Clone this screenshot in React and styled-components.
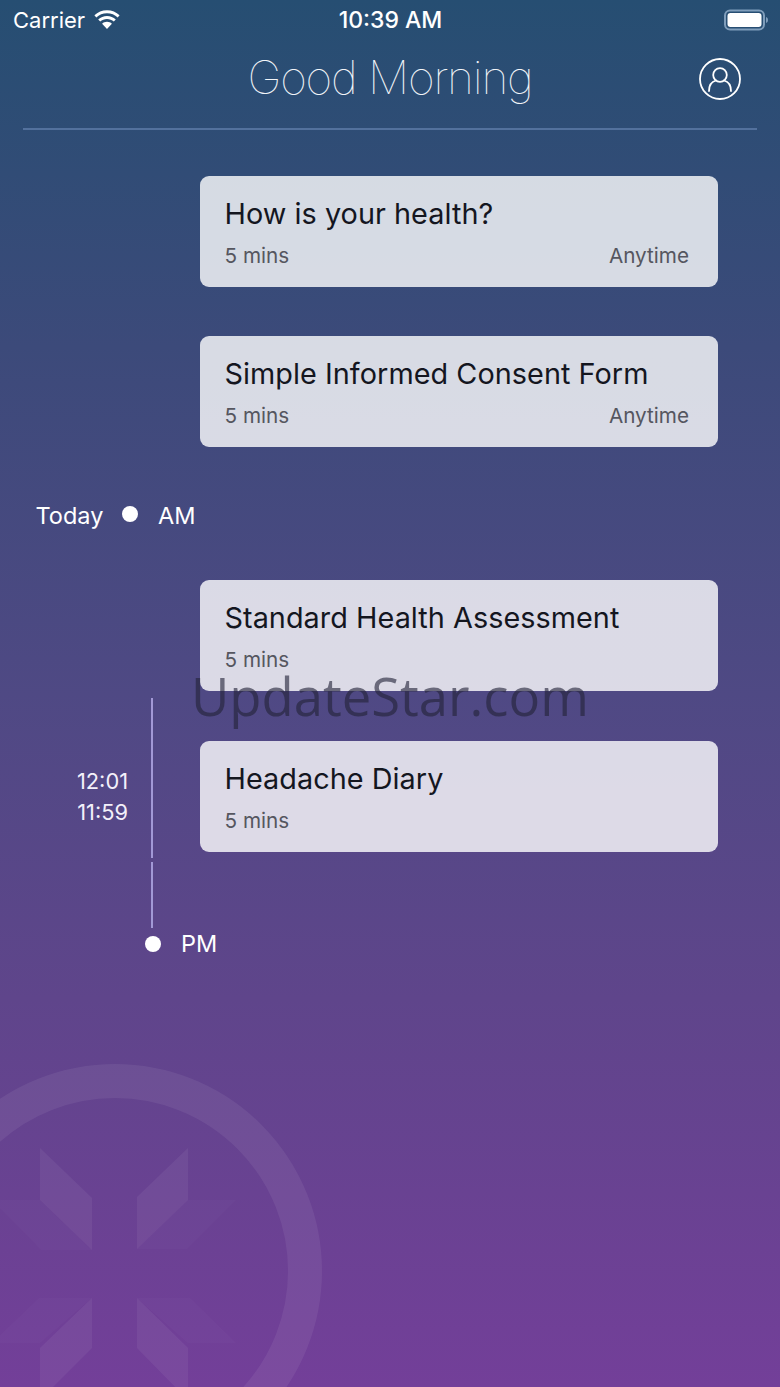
import React from "react";
import styled, { createGlobalStyle } from "styled-components";

const Global = createGlobalStyle`
  html, body { margin: 0; padding: 0; }
  body { font-family: Inter, "Liberation Sans", sans-serif; }
`;

const Page = styled.div`
  position: relative;
  width: 780px;
  height: 1387px;
  overflow: hidden;
  color: #fff;
  background: linear-gradient(180deg, #264e72 0%, #3c4a7a 25%, #4f4984 50%, #5f458b 72%, #733f99 100%);
`;

const Content = styled.div`
  position: relative;
  display: flex;
  flex-direction: column;
`;

const StatusBar = styled.div`
  display: grid;
  grid-template-columns: 1fr auto 1fr;
  align-items: center;
  height: 40px;
  padding: 0 12px 0 13px;
  font-size: 22px;
`;

const Carrier = styled.div`
  display: flex;
  align-items: center;
  gap: 8px;
`;

const Clock = styled.div`
  font-weight: 500;
  font-size: 23px;
`;

const Battery = styled.svg`
  justify-self: end;
`;

const Header = styled.header`
  position: relative;
  display: flex;
  justify-content: center;
  align-items: center;
  height: 76px;
  margin: 0 23px;
`;

const Title = styled.h1`
  margin: -2px 0 0;
  font-size: 46px;
  font-weight: 100;
  letter-spacing: -1.25px;
  color: #f2f5f9;
`;

const Profile = styled.svg`
  position: absolute;
  right: 16px;
  top: 18px;
`;

const Divider = styled.hr`
  margin: 12px 23px 0;
  height: 2px;
  border: 0;
  background: #53719d;
`;

const CardStack = styled.div`
  display: flex;
  flex-direction: column;
  gap: ${(p) => p.$gap}px;
`;

const TopCards = styled(CardStack)`
  margin: 46px 0 0 200px;
`;

const Card = styled.article`
  width: 518px;
  height: 111px;
  box-sizing: border-box;
  padding: 19.500px 29px 0 24.500px;
  border-radius: 9px;
  background: rgba(255, 255, 255, 0.8);
`;

const CardTitle = styled.div`
  font-size: 28.800px;
  line-height: 36px;
  letter-spacing: 0.05px;
  color: #14161f;
`;

const CardMeta = styled.div`
  display: flex;
  justify-content: space-between;
  margin-top: 11px;
  font-size: 20.700px;
  line-height: 26px;
  color: #55565f;
`;

const Marker = styled.div`
  display: flex;
  align-items: center;
  font-size: 23.500px;
  line-height: 30px;
`;

const TodayMarker = styled(Marker)`
  margin: 54px 0 0 35.500px;
  height: 30px;
`;

const TodayLabel = styled.span`
  width: 86.500px;
`;

const Dot = styled.span`
  width: 16px;
  height: 16px;
  border-radius: 50%;
  background: #fff;
`;

const AmDot = styled(Dot)`
  margin-top: -4px;
`;

const AmLabel = styled.span`
  margin-left: 20px;
`;

const Timeline = styled.div`
  display: flex;
  align-items: flex-start;
  margin-top: 49px;
`;

const RailColumn = styled.div`
  width: 200px;
  padding-top: 118px;
  height: 349px;
  box-sizing: border-box;
  display: flex;
  flex-direction: column;
  gap: 4px;
`;

const Rail = styled.div`
  width: 153px;
  height: ${(p) => p.$h}px;
  box-sizing: border-box;
  border-right: 2px solid #a299d6;
  padding-right: 23px;
  text-align: right;
`;

const Times = styled.div`
  padding-top: 68px;
  font-size: 21.800px;
  line-height: 31px;
  color: #f3f0fa;
`;

const PmMarker = styled(Marker)`
  margin: 0 0 0 145px;
`;

const PmLabel = styled.span`
  margin-left: 20px;
`;

const Emblem = styled.svg`
  position: absolute;
  left: 0;
  bottom: 0;
`;

const Watermark = styled.div`
  position: absolute;
  left: 191px;
  top: 659px;
  font-family: "Open Sans", sans-serif;
  font-size: 52.600px;
  line-height: 73px;
  color: rgba(36, 36, 56, 0.62);
  white-space: nowrap;
`;

const Wifi = () => (
  <svg width="28" height="20" viewBox="0 0 28 20" fill="#fff">
    <path d="M14 3.200c4.100 0 7.900 1.600 10.700 4.200l1.900-2.100C23.300 2.100 18.900.2 14 .2S4.700 2.100 1.400 5.300l1.900 2.100C6.100 4.800 9.900 3.200 14 3.200z" />
    <path d="M14 9c2.600 0 5 1 6.800 2.600l2-2.100C20.400 7.300 17.300 6 14 6S7.600 7.300 5.200 9.500l2 2.100C9 10 11.400 9 14 9z" />
    <path d="M14 11.800c-1.900 0-3.600.7-4.900 1.900L14 19l4.900-5.300c-1.300-1.200-3-1.900-4.900-1.900z" />
  </svg>
);

const tasks = [
  { title: "How is your health?", when: "Anytime" },
  { title: "Simple Informed Consent Form", when: "Anytime" },
];
const todayTasks = [{ title: "Standard Health Assessment" }, { title: "Headache Diary" }];

const Task = ({ title, when }) => (
  <Card>
    <CardTitle>{title}</CardTitle>
    <CardMeta>
      <span>5 mins</span>
      {when && <span>{when}</span>}
    </CardMeta>
  </Card>
);

export default function App() {
  return (
    <Page>
      <Global />
      <Emblem width="340" height="347" viewBox="0 1040 340 347">
        <circle cx="115" cy="1271" r="190" fill="none" stroke="rgba(255,255,255,0.065)" strokeWidth="34" />
        <g fill="rgba(255,255,255,0.055)">
          <path d="M188 1148L137 1197V1249L188 1200Z" />
          <path d="M40 1148L92 1198V1250L40 1200Z" />
          <path d="M137 1298L188 1348V1400L137 1348Z" />
          <path d="M92 1298L40 1348V1400L92 1348Z" />
        </g>
        <g fill="rgba(255,255,255,0.02)">
          <path d="M188 1200H236L187 1249H137Z" />
          <path d="M40 1200H-8L41 1250H92Z" />
          <path d="M137 1298H190L236 1343H188Z" />
          <path d="M92 1298H39L-8 1343H40Z" />
        </g>
      </Emblem>
      <Content>
        <StatusBar>
          <Carrier>
            Carrier
            <Wifi />
          </Carrier>
          <Clock>10:39 AM</Clock>
          <Battery width="44" height="22" viewBox="0 0 44 22">
            <rect x="1" y="1.500" width="39" height="19" rx="5" fill="none" stroke="#7f9dbb" strokeWidth="2" />
            <rect x="3.500" y="4" width="34" height="14" rx="3" fill="#fff" />
            <path d="M42 8c1.300.4 2 1.500 2 3s-.7 2.600-2 3z" fill="#7f9dbb" />
          </Battery>
        </StatusBar>
        <Header>
          <Title>Good Morning</Title>
          <Profile width="42" height="42" viewBox="0 0 42 42" fill="none" stroke="#fff" strokeWidth="1.800">
            <circle cx="21" cy="21" r="20" />
            <circle cx="21" cy="17" r="6.800" />
            <path d="M10 33c0-6 3-9.500 7-10.500M32 33c0-6-3-9.500-7-10.500" strokeLinecap="round" />
          </Profile>
        </Header>
        <Divider />
        <TopCards $gap={49}>
          {tasks.map((t) => (
            <Task key={t.title} {...t} />
          ))}
        </TopCards>
        <TodayMarker>
          <TodayLabel>Today</TodayLabel>
          <AmDot />
          <AmLabel>AM</AmLabel>
        </TodayMarker>
        <Timeline>
          <RailColumn>
            <Rail $h={160}>
              <Times>
                12:01
                <br />
                11:59
              </Times>
            </Rail>
            <Rail $h={66} />
          </RailColumn>
          <CardStack $gap={50}>
            {todayTasks.map((t) => (
              <Task key={t.title} {...t} />
            ))}
          </CardStack>
        </Timeline>
        <PmMarker>
          <Dot />
          <PmLabel>PM</PmLabel>
        </PmMarker>
      </Content>
      <Watermark>UpdateStar.com</Watermark>
    </Page>
  );
}
